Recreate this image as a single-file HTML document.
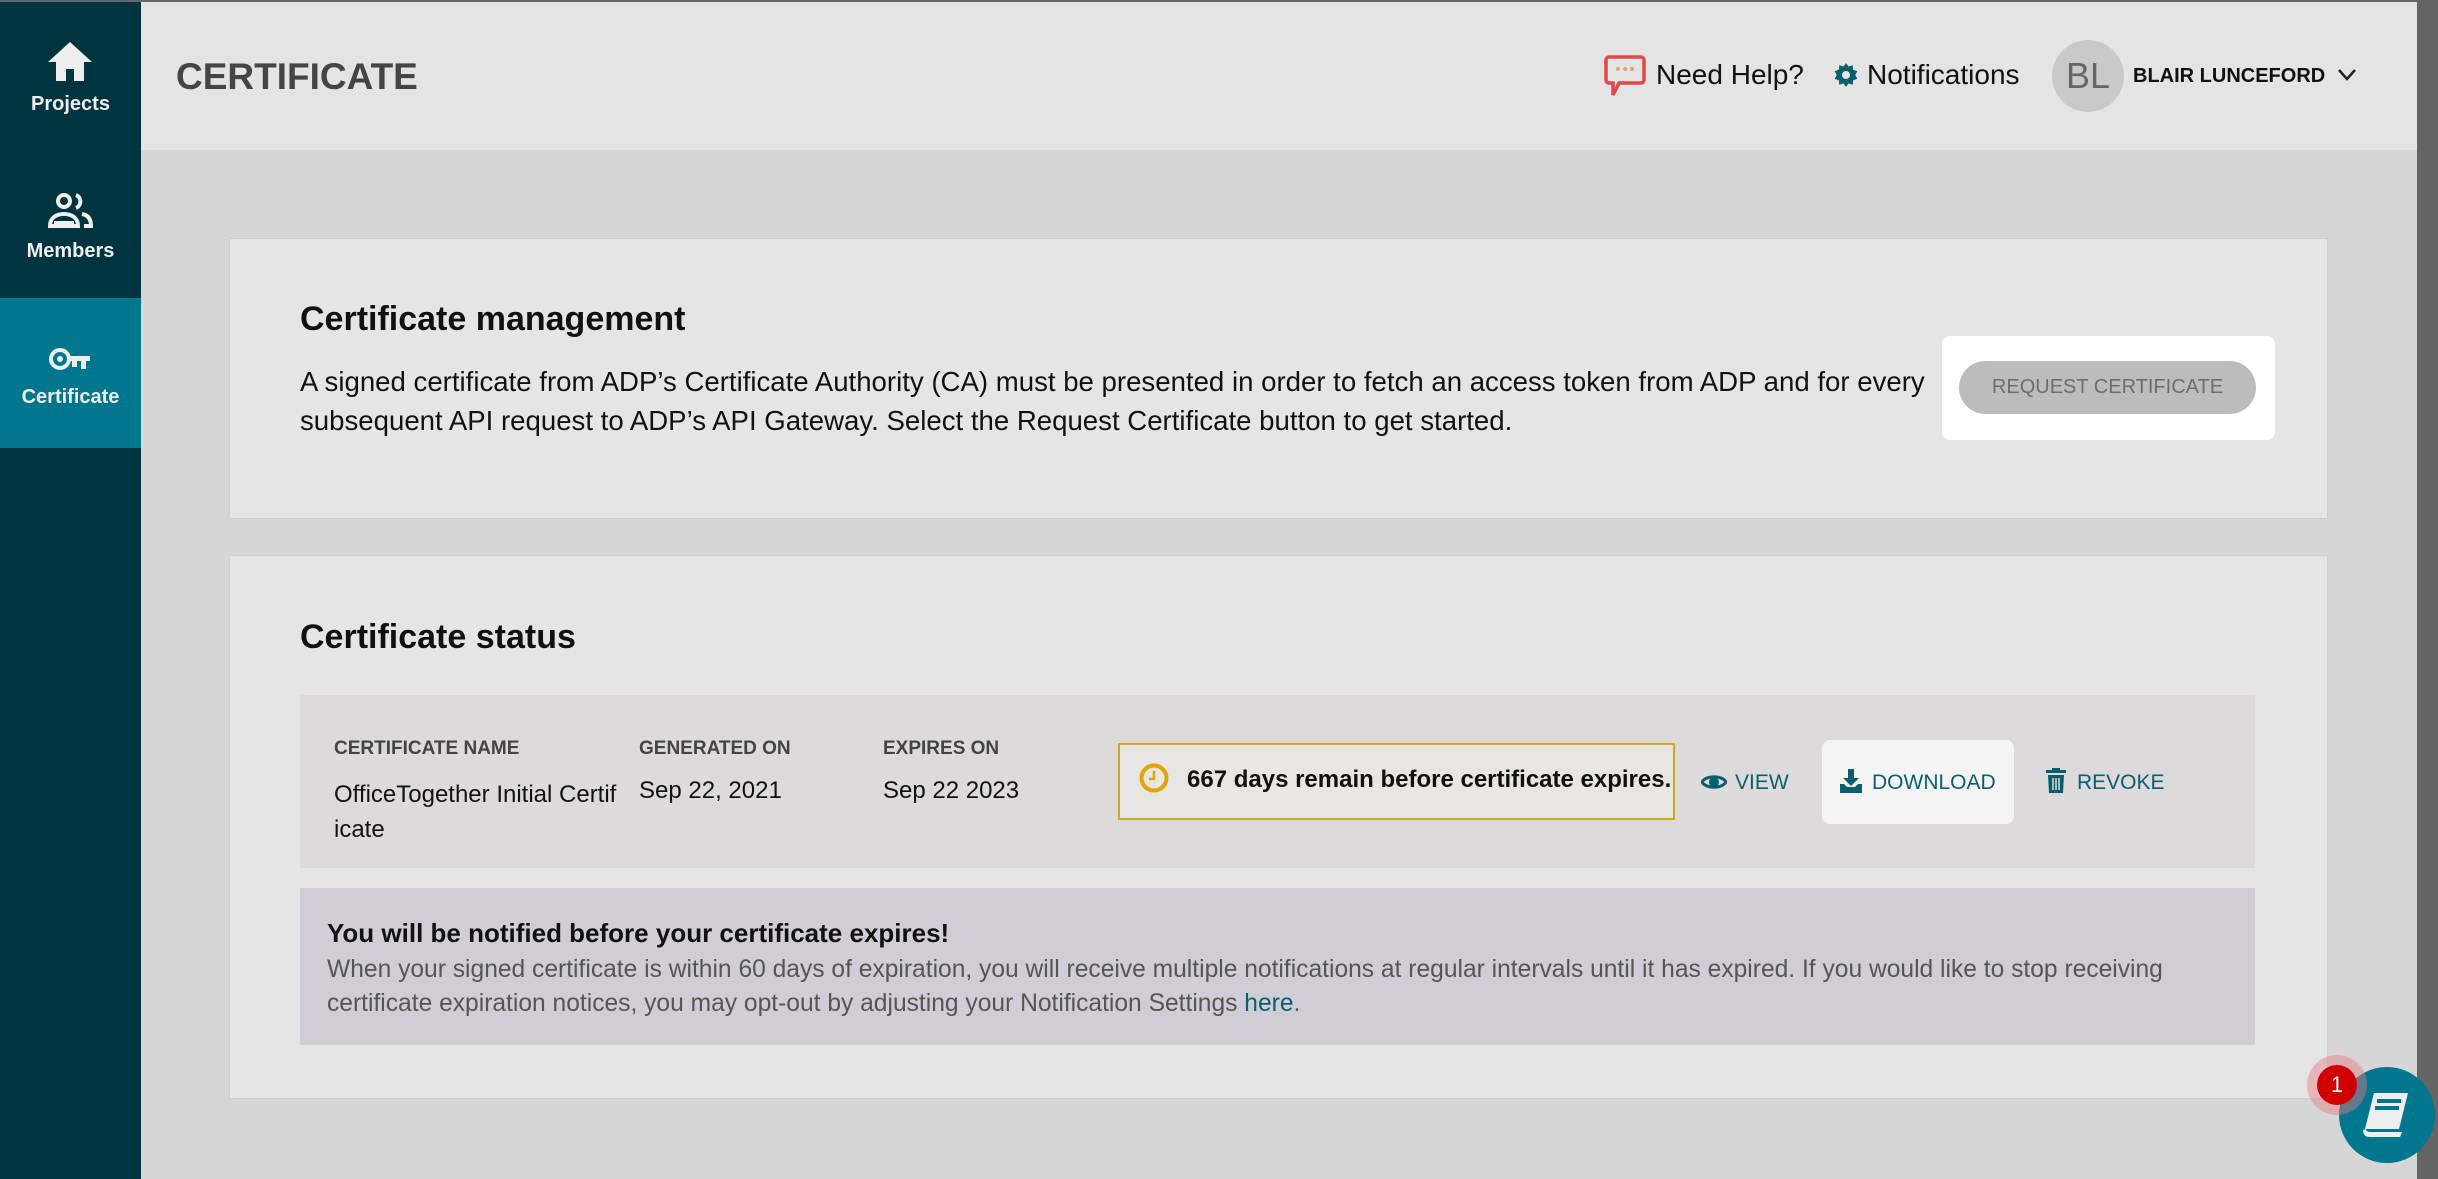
<!DOCTYPE html>
<html><head><meta charset="utf-8"><style>
*{margin:0;padding:0;box-sizing:border-box}
body{width:2438px;height:1179px;overflow:hidden;background:#d6d6d6;font-family:"Liberation Sans",sans-serif;position:relative}
.a{position:absolute}
.sb{left:0;top:0;width:141px;height:1179px;background:#023440}
.nav{left:0;width:141px;height:150px;color:#eee;font-size:20px;text-align:center;font-weight:600}
.hdr{left:141px;top:0;width:2276px;height:150px;background:#e4e4e4}
.card{background:#e5e5e5;border:1px solid #cfcfcf}
.teal{color:#0b5e6e}
.th{font-size:19px;color:#444;font-weight:bold}
</style></head><body>
<div class="a" style="left:0;top:0;width:2438px;height:2px;background:#666;z-index:5"></div>
<div class="a" style="left:2417px;top:0;width:21px;height:1179px;background:#646464;z-index:5"></div>
<div class="a sb"></div>
<div class="a nav" style="top:0">
 <svg class="a" style="left:47px;top:40px" width="46" height="42" viewBox="0 0 46 42"><path d="M23 2L1 22h8v19h10V29h8v12h10V22h8z" fill="#eee"/></svg>
 <div class="a" style="left:0;top:93px;width:141px">Projects</div></div>
<div class="a nav" style="top:150px">
 <svg class="a" style="left:48px;top:42px" width="46" height="38" viewBox="0 0 46 38"><circle cx="16" cy="9" r="6" fill="none" stroke="#eee" stroke-width="4"/><path d="M28 3a7 7 0 0 1 0 13" fill="none" stroke="#eee" stroke-width="4"/><path d="M2 34c0-8 6-12 14-12s14 4 14 12z M6 31h20" fill="none" stroke="#eee" stroke-width="4"/><path d="M34 22c6 1 9 5 9 12h-7" fill="none" stroke="#eee" stroke-width="4"/></svg>
 <div class="a" style="left:0;top:90px;width:141px">Members</div></div>
<div class="a nav" style="top:298px;background:#00778f">
 <svg class="a" style="left:48px;top:48px" width="44" height="28" viewBox="0 0 44 28"><circle cx="12" cy="13" r="9" fill="none" stroke="#eee" stroke-width="4"/><circle cx="12" cy="13" r="3" fill="#eee"/><path d="M21 10h21v5h-4v8h-5v-8h-4v6h-5v-6h-3z" fill="#eee"/></svg>
 <div class="a" style="left:0;top:88px;width:141px">Certificate</div></div>

<div class="a hdr"></div>
<div class="a" style="left:176px;top:56px;font-size:37px;color:#454545;font-weight:bold">CERTIFICATE</div>
<svg class="a" style="left:1603px;top:54px" width="44" height="46" viewBox="0 0 44 46"><path d="M6 3h32a3 3 0 0 1 3 3v20a3 3 0 0 1-3 3H16l-6 12v-12H6a3 3 0 0 1-3-3V6a3 3 0 0 1 3-3z" fill="none" stroke="#e24848" stroke-width="3.5"/><circle cx="15" cy="15" r="2" fill="#e8a070"/><circle cx="22" cy="15" r="2" fill="#e8a070"/><circle cx="29" cy="15" r="2" fill="#e8a070"/></svg>
<div class="a" style="left:1656px;top:59px;font-size:28px;color:#111">Need Help?</div>
<svg class="a" style="left:1834px;top:63px" width="24" height="24" viewBox="0 0 24 24"><path d="M12 0l2.5 3.5 4.2-1.2.4 4.3 4.2 1.6-2 3.8 2 3.8-4.2 1.6-.4 4.3-4.2-1.2L12 24l-2.5-3.5-4.2 1.2-.4-4.3L.7 15.8l2-3.800-2-3.8 4.2-1.6.4-4.3 4.2 1.2z" fill="#0b5e6e"/><circle cx="12" cy="12" r="4" fill="#e4e4e4"/></svg>
<div class="a" style="left:1867px;top:59px;font-size:28px;color:#111">Notifications</div>
<div class="a" style="left:2052px;top:40px;width:72px;height:72px;border-radius:50%;background:#c9c9c9;color:#666;font-size:36px;text-align:center;line-height:72px">BL</div>
<div class="a" style="left:2133px;top:65px;font-size:20px;font-weight:bold;color:#111">BLAIR LUNCEFORD</div>
<svg class="a" style="left:2337px;top:68px" width="20" height="14" viewBox="0 0 20 14"><path d="M2 2l8 9 8-9" fill="none" stroke="#222" stroke-width="2.5"/></svg>

<div class="a card" style="left:229px;top:238px;width:2099px;height:281px"></div>
<div class="a" style="left:300px;top:300px;font-size:34px;color:#111;font-weight:bold">Certificate management</div>
<div class="a" style="left:300px;top:362px;font-size:27.6px;line-height:39px;color:#111;width:1640px">A signed certificate from ADP’s Certificate Authority (CA) must be presented in order to fetch an access token from ADP and for every subsequent API request to ADP’s API Gateway. Select the Request Certificate button to get started.</div>
<div class="a" style="left:1942px;top:336px;width:333px;height:104px;background:#fff;border-radius:8px"></div>
<div class="a" style="left:1959px;top:361px;width:297px;height:53px;background:#bcbcbc;border-radius:27px;color:#6e6e6e;font-size:20px;text-align:center;line-height:53px">REQUEST CERTIFICATE</div>

<div class="a card" style="left:229px;top:555px;width:2099px;height:544px"></div>
<div class="a" style="left:300px;top:618px;font-size:34px;color:#111;font-weight:bold">Certificate status</div>
<div class="a" style="left:300px;top:695px;width:1955px;height:173px;background:#dcdadb"></div>
<div class="a th" style="left:334px;top:738px">CERTIFICATE NAME</div>
<div class="a th" style="left:639px;top:738px">GENERATED ON</div>
<div class="a th" style="left:883px;top:738px">EXPIRES ON</div>
<div class="a" style="left:334px;top:777px;font-size:24px;line-height:35px;color:#111;width:290px">OfficeTogether Initial Certif<br>icate</div>
<div class="a" style="left:639px;top:777px;font-size:24px;color:#111">Sep 22, 2021</div>
<div class="a" style="left:883px;top:777px;font-size:24px;color:#111">Sep 22 2023</div>
<div class="a" style="left:1118px;top:743px;width:557px;height:77px;border:2px solid #d9a520;background:#e8e6e2"></div>
<svg class="a" style="left:1138px;top:762px" width="32" height="32" viewBox="0 0 32 32"><circle cx="16" cy="16" r="12.5" fill="none" stroke="#e6a300" stroke-width="4"/><path d="M16 9v8h-5" fill="none" stroke="#e6a300" stroke-width="2.5"/></svg>
<div class="a" style="left:1187px;top:766px;font-size:24px;font-weight:bold;color:#111">667 days remain before certificate expires.</div>
<svg class="a" style="left:1701px;top:772px" width="26" height="20" viewBox="0 0 26 20"><path d="M1 10C5 3 21 3 25 10 21 17 5 17 1 10z" fill="none" stroke="#0b5e6e" stroke-width="3"/><circle cx="13" cy="10" r="5" fill="#0b5e6e"/></svg>
<div class="a teal" style="left:1735px;top:771px;font-size:21px">VIEW</div>
<div class="a" style="left:1822px;top:740px;width:192px;height:84px;background:#f5f4f5;border-radius:8px"></div>
<svg class="a" style="left:1840px;top:769px" width="22" height="24" viewBox="0 0 22 24"><path d="M8 0h6v9h5l-8 8-8-8h5z M0 15h4l3 3h8l3-3h4v9H0z" fill="#0b5e6e"/></svg>
<div class="a teal" style="left:1872px;top:771px;font-size:21px">DOWNLOAD</div>
<svg class="a" style="left:2046px;top:768px" width="20" height="25" viewBox="0 0 20 25"><path d="M6 0h8v2h6v3H0V2h6z M2 7h16l-1 18H3z" fill="#0b5e6e"/><path d="M7 10v12M10 10v12M13 10v12" stroke="#dcdadb" stroke-width="1.5"/></svg>
<div class="a teal" style="left:2077px;top:771px;font-size:21px">REVOKE</div>

<div class="a" style="left:300px;top:888px;width:1955px;height:157px;background:#d0cdd6"></div>
<div class="a" style="left:327px;top:918px;font-size:26px;font-weight:bold;color:#111">You will be notified before your certificate expires!</div>
<div class="a" style="left:327px;top:953px;font-size:24.6px;line-height:34px;color:#555;width:1910px">When your signed certificate is within 60 days of expiration, you will receive multiple notifications at regular intervals until it has expired. If you would like to stop receiving certificate expiration notices, you may opt-out by adjusting your Notification Settings <span class="teal">here</span>.</div>

<div class="a" style="left:2339px;top:1067px;width:96px;height:96px;border-radius:50%;background:#00778f;z-index:6"></div>
<svg class="a" style="left:2360px;top:1090px;z-index:7" width="52" height="50" viewBox="0 0 52 50"><path d="M14 3h34l-9 36H5z" fill="#eee"/><path d="M3 40q0 7 7 7h30l2-5H11q-5 0-5-3z" fill="#eee"/><path d="M17 11h24M15 18h24" stroke="#00778f" stroke-width="4"/></svg>
<div class="a" style="left:2307px;top:1055px;width:60px;height:60px;border-radius:50%;background:rgba(230,120,130,.45);z-index:7"></div>
<div class="a" style="left:2317px;top:1065px;width:40px;height:40px;border-radius:50%;background:#d00000;color:#fff;font-size:22px;text-align:center;line-height:40px;z-index:8">1</div>
</body></html>
